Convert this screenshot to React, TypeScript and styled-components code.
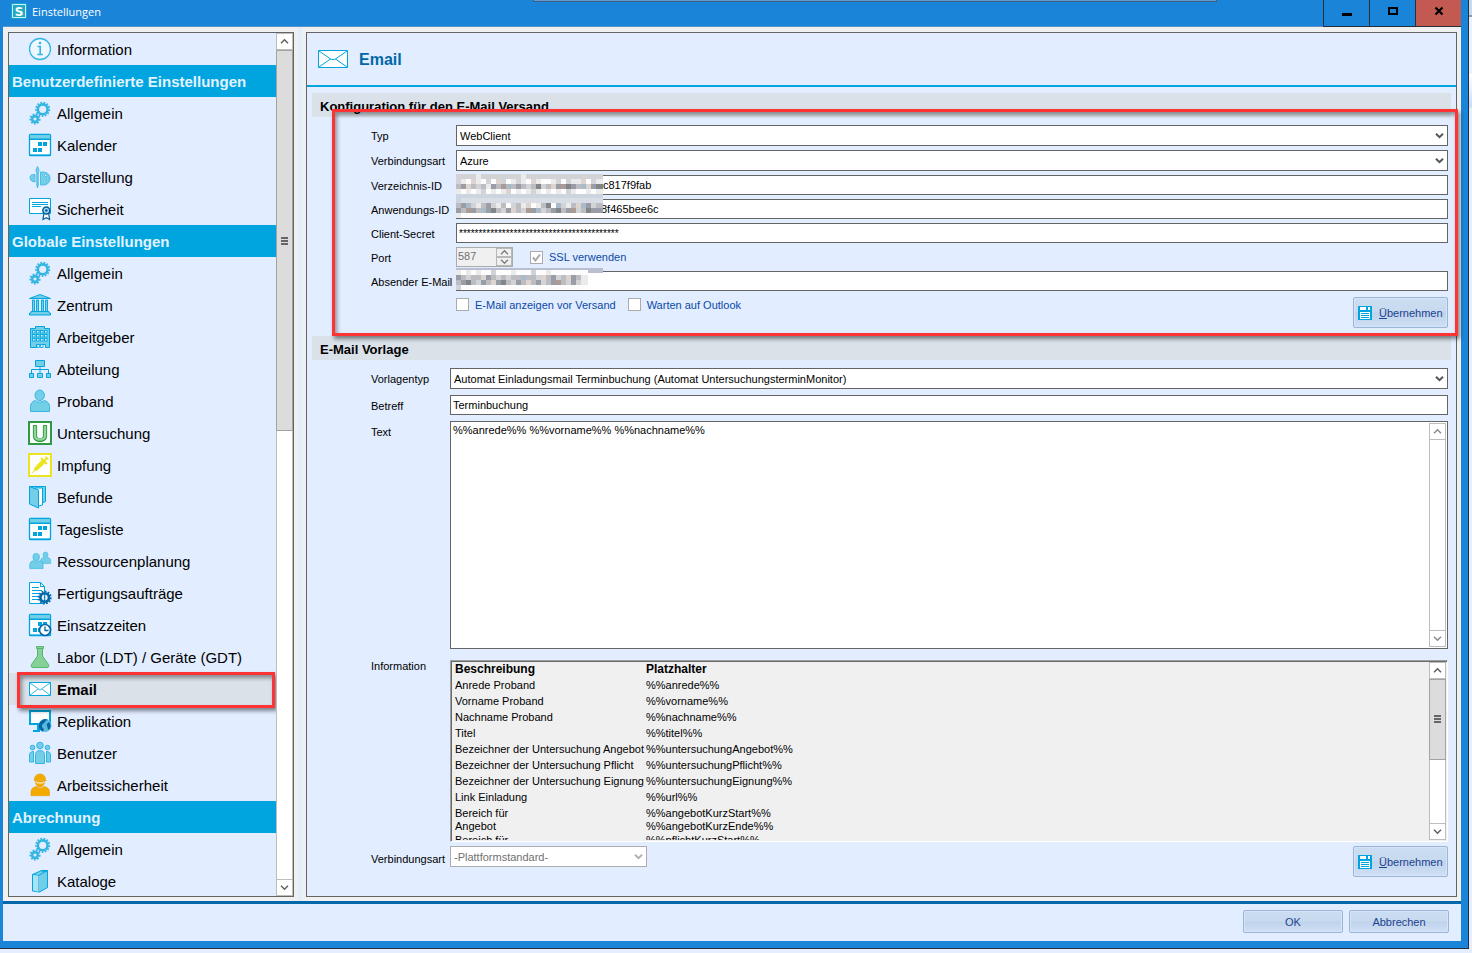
import React from 'react';
import styled, { createGlobalStyle, css } from 'styled-components';

const c = {
  chrome: '#1a84d9',
  pane: '#e2edff',
  face: '#f0f0f0',
  cyan: '#00a5e0',
  light: '#73cfe8',
  soft: '#35b5e2',
  navy: '#0068a8',
  frame: '#646464',
  band: '#dae1e9',
  link: '#0b49a8',
  red: '#ff3333',
};

const Global = createGlobalStyle`
  * { box-sizing: border-box; }
  html, body, #root { height: 100%; }
  body {
    margin: 0;
    background: #e4eeff;
    color: #000;
    font-family: "Liberation Sans", Arial, sans-serif;
    font-size: 11px;
  }
  button, input, select, textarea { font: inherit; color: inherit; margin: 0; }
`;

/* ---------- window ---------- */

const Desktop = styled.div`
  height: 100%;
  min-height: 700px;
  padding: 0 3px 4px 0;
  background: linear-gradient(#c8daf0 0 15px, #999 15px 17px, #e9f1ff 17px 74px, #fff 74px, #ccdaf7 107px, #e4eeff 108px);
`;

const Window = styled.div`
  position: relative;
  display: flex;
  flex-direction: column;
  height: 100%;
  padding: 0 7px 7px 3px;
  background: ${c.chrome};
  border: solid #26303c;
  border-width: 0 1px 1px 0;
`;

const TitleBar = styled.header`
  display: flex;
  justify-content: space-between;
  height: 27px;
  border-bottom: 1px solid #5b93c9;
`;

const Caption = styled.h1`
  display: flex;
  gap: 5px;
  margin: 0;
  padding: 3px 0 0 8px;
  color: #fff;
  font: 11px/18px "Open Sans", sans-serif;
`;

const BackTab = styled.div`
  position: absolute;
  top: 0;
  left: 533px;
  right: 251px;
  height: 2px;
  background: #5f9bd0;
  border: solid #3f5f80;
  border-width: 0 1px 1px;
`;

const WindowButtons = styled.div`
  display: flex;
  height: 27px;
`;

const WindowButton = styled.button<{ $close?: boolean }>`
  width: 46px;
  padding: 0;
  border: solid #26303c;
  border-width: 0 0 1px 1px;
  background: ${p => (p.$close ? '#c25a51' : c.chrome)};
  svg { display: block; margin: 0 auto 4px; }
`;

const Body = styled.div`
  display: flex;
  flex: 1;
  min-height: 0;
  padding: 5px 4px 4px 5px;
  background: ${c.face};
`;

const Splitter = styled.div`
  flex: none;
  width: 12px;
  margin: -5px 0 -4px;
  background: linear-gradient(90deg, ${c.face} 4px, ${c.pane} 4px 8px, ${c.face} 8px);
`;

const Footer = styled.footer`
  display: flex;
  justify-content: flex-end;
  gap: 6px;
  height: 40px;
  padding: 6px 12px 0 0;
  border-top: 3px solid ${c.navy};
  background: ${c.pane};
`;

/* ---------- sidebar ---------- */

const Sidebar = styled.nav`
  position: relative;
  display: flex;
  flex: none;
  width: 286px;
  border: 1px solid ${c.frame};
  background: ${c.pane};
`;

const NavList = styled.div`
  flex: 1;
  overflow: hidden;
`;

const NavHeading = styled.h2`
  height: 32px;
  margin: 0;
  padding-left: 3px;
  background: ${c.cyan};
  color: #e2f3ff;
  font-size: 15px;
  line-height: 33px;
`;

const NavItem = styled.a<{ $active?: boolean }>`
  position: relative;
  display: flex;
  align-items: center;
  gap: 5px;
  height: 32px;
  padding-left: 19px;
  color: #000;
  font-size: 15px;
  font-weight: ${p => (p.$active ? 700 : 400)};
  text-decoration: none;
  background: ${p => (p.$active ? c.band : 'transparent')};
  svg { flex: none; }
`;

const NavText = styled.span`
  padding-top: 2px;
  line-height: 18px;
`;

const marked = css`
  position: absolute;
  border: 3px solid ${c.red};
  box-shadow: 2px 3px 4px rgba(0, 0, 0, 0.45), inset 2px 3px 4px rgba(0, 0, 0, 0.4);
  pointer-events: none;
`;
const ItemMark = styled.span`
  ${marked}
  inset: -1px 1px -3px 8px;
  z-index: 1;
`;
const FormMark = styled.div`
  ${marked}
  inset: -8px -2px -8px 25px;
`;

/* ---------- scroll bar ---------- */

const Bar = styled.div`
  display: flex;
  flex: none;
  flex-direction: column;
  width: 17px;
  border: 1px solid #bdbdbd;
  background: #fff;
`;
const BarButton = styled.button<{ $end?: boolean }>`
  flex: none;
  height: 16px;
  padding: 0;
  border: solid #bdbdbd;
  border-width: ${p => (p.$end ? '1px 0 0' : '0 0 1px')};
  background: #fff;
  svg { display: block; margin: auto; }
`;
const Track = styled.div`
  flex: 1;
`;
const Thumb = styled.div<{ $size: number }>`
  display: flex;
  align-items: center;
  justify-content: center;
  height: ${p => p.$size}%;
  margin: 0 -1px;
  border: 1px solid #a3a3a3;
  background: #dcdcdc;
`;

function Chevron({ up, color = '#606060', width = 1.5 }: { up?: boolean; color?: string; width?: number }) {
  return (
    <svg width="9" height="7" viewBox="0 0 9 7" fill="none" stroke={color} strokeWidth={width}>
      <path d={up ? 'M1 5.2 4.5 1.8 8 5.2' : 'M1 1.8 4.5 5.2 8 1.8'} />
    </svg>
  );
}

function ScrollBar({ size, color }: { size?: number; color?: string }) {
  return (
    <Bar>
      <BarButton type="button" aria-label="Nach oben"><Chevron up color={color} /></BarButton>
      <Track>
        {size && (
          <Thumb $size={size}>
            <svg width="7" height="8" fill="#666">
              <path d="M0 0h7v2H0zM0 3h7v2H0zM0 6h7v2H0z" />
            </svg>
          </Thumb>
        )}
      </Track>
      <BarButton type="button" $end aria-label="Nach unten"><Chevron color={color} /></BarButton>
    </Bar>
  );
}

/* ---------- main panel ---------- */

const Panel = styled.main`
  display: flex;
  flex: 1;
  flex-direction: column;
  min-width: 0;
  border: 1px solid ${c.frame};
  background: ${c.pane};
`;

const PanelHeader = styled.div`
  display: flex;
  align-items: center;
  gap: 11px;
  height: 54px;
  margin-bottom: 6px;
  padding-left: 11px;
  border-bottom: 2px solid ${c.cyan};
  h2 { margin: 0; color: ${c.navy}; font-size: 16px; line-height: 18px; padding-top: 2px; }
`;

const SectionTitle = styled.h3`
  height: 24px;
  margin: 0 5px;
  padding-left: 8px;
  background: ${c.band};
  font-size: 13px;
  line-height: 27px;
`;

const ConfigForm = styled.form`
  position: relative;
  display: grid;
  grid-template-columns: 85px 1fr;
  gap: 4px 0;
  margin-bottom: 8px;
  padding: 8px 8px 0 64px;
`;

const TemplateForm = styled.form`
  display: grid;
  grid-template-columns: 79px 1fr;
  grid-template-rows: auto auto 1fr auto auto;
  gap: 6px 0;
  flex: 1;
  min-height: 0;
  padding: 8px 8px 19px 64px;
`;

const Label = styled.label`
  height: 20px;
  line-height: 22px;
  white-space: nowrap;
`;

const Field = styled.div`
  position: relative;
  display: flex;
`;

const TextInput = styled.input<{ $lead?: number; $small?: boolean }>`
  width: 100%;
  height: 20px;
  padding: 0 3px 0 ${p => p.$lead ?? 2}px;
  border: 1px solid ${c.frame};
  border-radius: 0;
  background: #fff;
  font-size: ${p => (p.$small ? 10 : 11)}px;
`;

const SelectBox = styled.div<{ $narrow?: boolean }>`
  position: relative;
  width: ${p => (p.$narrow ? '197px' : '100%')};
  height: 21px;
  select {
    appearance: none;
    width: 100%;
    height: 100%;
    padding: 0 20px 0 3px;
    border: 1px solid ${c.frame};
    border-radius: 0;
    background: #fff;
  }
  select:disabled { border-color: #adadad; color: #707070; opacity: 1; }
  svg { position: absolute; top: 7px; right: 4px; pointer-events: none; }
`;

const Spinner = styled.div`
  display: flex;
  width: 57px;
  height: 20px;
  border: 1px solid #ababab;
  background: ${c.face};
  input {
    flex: 1;
    min-width: 0;
    padding: 0 0 2px 1px;
    border: 0;
    background: none;
    color: #707070;
  }
`;
const SpinButtons = styled.div`
  display: grid;
  width: 16px;
  button { padding: 0; border: 1px solid #b8b8b8; background: ${c.face}; }
  svg { display: block; margin: auto; }
`;

const Checks = styled.div`
  display: flex;
  gap: 12px;
  padding-top: 1px;
`;
const CheckLabel = styled.label`
  display: flex;
  align-items: center;
  gap: 6px;
  height: 13px;
  color: ${c.link};
  white-space: nowrap;
`;
const CheckBox = styled.input`
  appearance: none;
  width: 13px;
  height: 13px;
  border: 1px solid #ababab;
  background: #fff;
`;
const CheckWrap = styled.span`
  position: relative;
  display: flex;
  svg { position: absolute; inset: 0; }
`;

const PortRow = styled.div`
  display: flex;
  align-items: center;
  gap: 17px;
`;

const ConfigActions = styled.div`
  display: flex;
  grid-column: 2;
  justify-content: space-between;
  padding-top: 2px;
`;
const TemplateActions = styled.div`
  display: flex;
  align-items: flex-start;
  justify-content: space-between;
  margin-top: -2px;
`;

const Button = styled.button<{ $save?: boolean }>`
  display: flex;
  align-items: center;
  justify-content: ${p => (p.$save ? 'flex-start' : 'center')};
  gap: 7px;
  width: ${p => (p.$save ? 95 : 100)}px;
  height: ${p => (p.$save ? 31 : 23)}px;
  padding: 0 0 0 ${p => (p.$save ? 4 : 0)}px;
  border: 1px solid #9ab5da;
  border-radius: 2px;
  background: linear-gradient(#cbddf1, #c8daef 45%, #bfd3ea 52%, #cfdff6);
  box-shadow: inset 0 0 0 1px #d6e4f6;
  color: #1d428f;
  white-space: nowrap;
`;

const TextArea = styled.div`
  display: flex;
  min-height: 60px;
  padding: 1px;
  border: 1px solid ${c.frame};
  background: #fff;
  textarea {
    flex: 1;
    padding: 1px;
    border: 0;
    background: none;
    line-height: 13px;
    resize: none;
    outline: 0;
  }
`;

const InfoBox = styled.div`
  display: flex;
  height: 182px;
  margin-top: 5px;
  border: 1px solid;
  border-color: #a0a0a0 #fff #fff #a0a0a0;
  background: ${c.face};
  box-shadow: inset 1px 1px 0 #696969;
  padding: 1px 1px 1px 4px;
`;
const InfoScroll = styled.div`
  flex: 1;
  height: 178px;
  overflow: hidden;
  table { border-collapse: collapse; }
  th, td {
    height: 16px;
    padding: 1px 0 0;
    line-height: 13px;
    text-align: left;
    vertical-align: top;
    white-space: nowrap;
  }
  th { font-size: 12px; }
  th:first-child { width: 191px; }
`;

/* ---------- pixelated censor strips ---------- */

const Censor = styled.svg<{ $top: number }>`
  position: absolute;
  left: 0;
  top: ${p => p.$top}px;
  pointer-events: none;
`;

const tones: Record<string, string> = {
  w: '#fdfdfd', l: '#ebebec', g: '#d2d3d6', m: '#bdbcc0', d: '#9b9da6', k: '#80868a',
  b: '#a9bac8', t: '#ded4cf', r: '#ab9b94', s: '#ccd4e0', p: '#d9dee6', h: '#b9bfd0',
};
const idStrip = [
  'gggglgggggggglggggggggggggggg',
  'glwtlwgwtgwlglwtlwwlgwglltwgl',
  'mdtmgmldmrbmdmgmkgmtdrkdmbtdk',
  'lwlwlgwlwltwlwlglwlwlwglwwlwl',
  'sssssssssssssssssssssssssssss',
];
const appStrip = [
  'spppppppppppppppppppppppppppp',
  'mdbglmdglmwgmltwlmkwbglmtbdgm',
  'dmrdmbdkmgdtmgrdbgmdkmdrgmkdd',
  'lwwwwwwwwwwwwwwwwwwwwwwwwwwww',
];
const mailStrip = [
  'lwlwlwwgwwwlwwwgwwlwwwwwww',
  'dmgmmtdmgmgmmbmmgtmdgmtdml',
  'mdkmgdmtdkmgdmtmdgmdrmgdgl',
  'gwwwwwwwwwwwwwwwwwwwwwwwww',
];
const edgeStrip = ['h'.repeat(29)];

function Pixels({ rows, top }: { rows: string[]; top: number }) {
  return (
    <Censor $top={top} width={rows[0].length * 5 + 2} height={rows.length * 5} shapeRendering="crispEdges" aria-hidden>
      {rows.map((row, j) => [...row].map((k, i) => (
        <rect key={`${i}-${j}`} x={i * 5} y={j * 5} width={i === row.length - 1 ? 7 : 5} height="5" fill={tones[k]} />
      )))}
    </Censor>
  );
}

/* ---------- icons ---------- */

const person = (x: number, y: number, s: number) => (
  <g transform={`translate(${x} ${y}) scale(${s})`} fill={c.light} stroke={c.soft}>
    <path d="M2.500 22.500v-5c0-3.500 2.500-5.500 5-6 2 2.200 6.500 2.200 8.500 0 3 .5 5.500 2.500 5.500 6v5z" />
    <ellipse cx="11.700" cy="6.300" rx="4.700" ry="5.300" />
  </g>
);

const gear = (x: number, y: number, r: number, color: string, n: number) => (
  <g fill="none" stroke={color}>
    <circle cx={x} cy={y} r={r - 2.5} strokeWidth="2.600" />
    <circle cx={x} cy={y} r={r - 0.7} strokeWidth="1.800" pathLength={n * 2} strokeDasharray="1.100 .9" />
  </g>
);

const calendar = (
  <>
    <rect x="1.500" y="1.500" width="21" height="21" rx="1" fill="#fff" stroke={c.cyan} strokeWidth="1.300" />
    <path d="M2 2h20v4H2z" fill={c.light} />
    <path d="M1 5.500h22V7H1zM10 9h4v4h-4zM15 9h4v4h-4zM5 15h4v4H5zM10 15h4v4h-4zM1 21.500h22v1.500H1z" fill={c.cyan} />
  </>
);

const icons: Record<string, React.ReactNode> = {
  info: (
    <g fill="none" stroke={c.soft}>
      <circle cx="12" cy="12" r="10.500" fill="#ecf7ff" strokeWidth="1.300" />
      <path d="M9.500 9.500h2.700v8M9.300 17.500h5.500" strokeWidth="1.600" />
      <circle cx="12" cy="6" r=".7" strokeWidth="1.200" />
    </g>
  ),
  gears: <>{gear(14.7, 8.3, 7.4, c.soft, 13)}{gear(7, 18, 5.4, c.soft, 9)}</>,
  calendar,
  brush: (
    <g fill={c.light} stroke={c.soft} strokeWidth=".8">
      <path d="M7 9.500C3.500 9 2 10.500 2 12.500s1.500 4.500 5 4.500z" />
      <path d="M12.500 7H15c4.500 0 7 3 7 6.500S19.500 20 15.500 20h-3z" />
      <circle cx="17.500" cy="10.500" r="1" fill="#fff" /><circle cx="19.300" cy="14" r="1" fill="#fff" /><circle cx="16.500" cy="16.700" r="1" fill="#fff" />
      <path d="M9.500 1.500c2 3 1.500 5 .7 6.500v12l-.7 3-.7-3V8c-.9-1.500-1.300-3.500.7-6.500z" />
    </g>
  ),
  certificate: (
    <g fill="none">
      <path d="M1.500 1.500h21v15h-21z" fill="#fff" stroke={c.cyan} />
      <path d="M4 5.500h16M4 7.500h16M4 9.500h9" stroke={c.cyan} />
      <path d="m16 16-1 6.500 3.300-1.800 3.300 1.800-1-6.500" fill="#fff" stroke="#005c99" strokeWidth="1.200" />
      <circle cx="18.300" cy="13.500" r="3.500" fill="#9fd4ee" stroke="#005c99" strokeWidth="1.500" />
      <circle cx="18.300" cy="13.500" r="1.300" fill="#005c99" />
    </g>
  ),
  museum: (
    <g fill={c.light} stroke={c.cyan}>
      <path d="M1.500 5.500 12 1.500l10.500 4z" />
      <path d="M4.500 7h2v11.500h-2zM8.500 7h2v11.500h-2zM13.500 7h2v11.500h-2zM17.500 7h2v11.500h-2z" strokeWidth=".9" />
      <path d="M3 18.500h18v1.500h1.500v2h-21v-2H3z" />
    </g>
  ),
  building: (
    <g>
      <path d="M2.500 3.500h5v-2h9v2h5v19h-4v-3h-9v3h-6z" fill={c.light} stroke={c.cyan} />
      <path d="M9 19.500h2.500v3H9zM12.500 19.500H15v3h-2.500z" fill="#e2f6ff" stroke={c.cyan} strokeWidth=".8" />
      {[5.5, 9.5, 13.5].map(y => [4.5, 8.5, 12.5, 16.5].map(x => (
        <rect key={`${x}-${y}`} x={x} y={y} width="2.500" height="2.500" fill="#e9f8ff" stroke={c.cyan} strokeWidth=".9" />
      )))}
    </g>
  ),
  org: (
    <g fill={c.light} stroke={c.cyan}>
      <path d="M7.500 3.500h9v6h-9zM1.500 16.500h4v4h-4zM9.500 16.500h5v4h-5zM18.500 16.500h4v4h-4z" />
      <path d="M12 9.500v7M3.500 16.500v-4h17v4" fill="none" />
    </g>
  ),
  person: person(0, 0, 1),
  exam: (
    <g>
      <path d="M1 1h22v22H1z" fill="#fff" stroke="#2f9a41" strokeWidth="2" />
      <path d="M7 4v11c0 5.500 10 5.500 10 0V4" fill="none" stroke="#2f9a41" strokeWidth="4.200" />
      <path d="M7 4.800V15c0 4.700 10 4.700 10 0V4.800" fill="none" stroke="#8fd69b" strokeWidth="2.400" />
    </g>
  ),
  syringe: (
    <g stroke="#ece41c" fill="#ece41c">
      <path d="M1 1h22v22H1z" fill="#fff" strokeWidth="2" />
      <path d="m4 20 4-4" strokeWidth="1" />
      <path d="m6.500 15 8-8.500 3 3-8.500 8-2.500.5z" strokeWidth=".5" />
      <path d="m13 5 6 6M16.500 7.500 19 5" strokeWidth="1.800" />
      <path d="m17.500 3.500 3 3" strokeWidth="1.500" />
    </g>
  ),
  folder: (
    <g stroke={c.cyan} fill={c.light}>
      <path d="M1.500 1.500h16v15l-5 2z" />
      <path d="M7 3h7.500v17l-4 1z" fill="#fff" />
      <path d="M1.500 1.500 10.500 5v18L1.500 19z" />
    </g>
  ),
  people: <>{person(11.3, 2.5, 0.53)}{person(0, 3.7, 0.7)}</>,
  order: (
    <>
      <path d="M1.500 1.500h11l4 4v17h-15z" fill="#fff" stroke={c.cyan} />
      <path d="M12.500 1.500v4h4M4 6.500h7M4 9.500h10M4 12.500h7M4 15.500h6M4 18.500h6" stroke={c.cyan} fill="none" />
      <circle cx="16.700" cy="16.500" r="5" fill="#e2edff" />
      {gear(16.7, 16.5, 6.8, c.navy, 12)}
      <path d="M16.700 13v7" stroke={c.navy} />
    </>
  ),
  shift: (
    <>
      {calendar}
      <circle cx="17" cy="17" r="5.500" fill="#fff" stroke={c.navy} strokeWidth="1.700" />
      <path d="M17 13.500V17.500h3.500" stroke={c.navy} strokeWidth="1.300" fill="none" />
    </>
  ),
  flask: (
    <g fill="#85d097" stroke="#58b570">
      <path d="M9.500 3v8l-6 8.500c-1 2 0 3 1.500 3h14c1.500 0 2.500-1 1.500-3l-6-8.500V3z" />
      <path d="M8.500 1.500h7v2h-7z" />
    </g>
  ),
  mail: (
    <g fill="none" stroke={c.cyan}>
      <path d="M1.500 5.500h21v13h-21z" fill="#fff" />
      <path d="m2 6 10 7 10-7M2 18l8-6M22 18l-8-6" strokeWidth=".8" />
    </g>
  ),
  sync: (
    <>
      <path d="M2 2h20v13H2z" fill="#fff" stroke={c.cyan} strokeWidth="2" />
      <path d="M5 21h7v2H5zM9 16h3v5H9z" fill={c.cyan} />
      <circle cx="17" cy="16.500" r="6.500" fill="#5bb9de" />
      <path d="M11 15c2-5 7-6 9-4-3 0-3 3-5 4s-1 4 1 5l-1 2.500c-3-.5-5-4-4-7.500zM21 13c2 2 2 6 0 8-2-1-1-3-2-4s0-3 2-4z" fill={c.navy} />
    </>
  ),
  users: (
    <g fill={c.light} stroke={c.soft}>
      <circle cx="4.500" cy="6.500" r="2.300" /><circle cx="19.500" cy="6.500" r="2.300" />
      <path d="M5.500 10.500c-3 0-4 1.500-4 3.500v7h4zM18.500 10.500c3 0 4 1.500 4 3.500v7h-4z" />
      <path d="M7.500 22.500v-9c0-2.500 2-4 4.500-4s4.500 1.500 4.500 4v9z" />
      <circle cx="12" cy="4.500" r="3.300" />
    </g>
  ),
  worker: (
    <g fill="#f3ab00" stroke="#e89c00" strokeWidth=".6">
      <path d="M3 22.700v-4c0-3 2.500-4.700 5.500-5.200 2 2 5.500 2 7.500 0 3 .5 5.500 2.200 5.500 5.200v4z" />
      <path d="M7.500 8c0 4 2 6 4.500 6s4.500-2 4.500-6z" />
      <path d="M6.300 7.500C6.300 3 9 1 12 1s5.500 2 5.500 5.500l1 1z" />
      <path d="M8 9c2.500 1.300 6 1.300 8 0" fill="none" stroke="#ffe6ae" strokeWidth="1.400" />
    </g>
  ),
  book: (
    <g fill={c.light} stroke={c.cyan}>
      <path d="M4.500 5.500 13.500 1.500h6v17l-8 4.500-7-1z" />
      <path d="m4.500 5.500 6 1 9-5M10.500 6.500v16.500M13 1.800l4.500.7" fill="none" />
      <path d="M5 6v15.500l5.500 1.200V6.800z" fill="#a9e2f2" stroke="none" />
    </g>
  ),
};

const Icon = ({ name }: { name: string }) => <svg width="24" height="24" viewBox="0 0 24 24" aria-hidden>{icons[name]}</svg>;

const SaveIcon = () => (
  <svg width="14" height="14" viewBox="0 0 14 14" aria-hidden>
    <path d="M0 0h14v14H0z" fill={c.cyan} />
    <path d="M2 1h6v3H2zM10 1h2v3h-2zM2 6h10v7H2z" fill="#fff" />
    <path d="M3 7.500h8M3 9.500h8M3 11.500h8" stroke={c.cyan} />
  </svg>
);

/* ---------- data ---------- */

type Entry = { heading: string } | { icon: string; text: string };

const entries: Entry[] = [
  { icon: 'info', text: 'Information' },
  { heading: 'Benutzerdefinierte Einstellungen' },
  { icon: 'gears', text: 'Allgemein' },
  { icon: 'calendar', text: 'Kalender' },
  { icon: 'brush', text: 'Darstellung' },
  { icon: 'certificate', text: 'Sicherheit' },
  { heading: 'Globale Einstellungen' },
  { icon: 'gears', text: 'Allgemein' },
  { icon: 'museum', text: 'Zentrum' },
  { icon: 'building', text: 'Arbeitgeber' },
  { icon: 'org', text: 'Abteilung' },
  { icon: 'person', text: 'Proband' },
  { icon: 'exam', text: 'Untersuchung' },
  { icon: 'syringe', text: 'Impfung' },
  { icon: 'folder', text: 'Befunde' },
  { icon: 'calendar', text: 'Tagesliste' },
  { icon: 'people', text: 'Ressourcenplanung' },
  { icon: 'order', text: 'Fertigungsaufträge' },
  { icon: 'shift', text: 'Einsatzzeiten' },
  { icon: 'flask', text: 'Labor (LDT) / Geräte (GDT)' },
  { icon: 'mail', text: 'Email' },
  { icon: 'sync', text: 'Replikation' },
  { icon: 'users', text: 'Benutzer' },
  { icon: 'worker', text: 'Arbeitssicherheit' },
  { heading: 'Abrechnung' },
  { icon: 'gears', text: 'Allgemein' },
  { icon: 'book', text: 'Kataloge' },
];

const placeholders: [string, string][] = [
  ['Anrede Proband', '%%anrede%%'],
  ['Vorname Proband', '%%vorname%%'],
  ['Nachname Proband', '%%nachname%%'],
  ['Titel', '%%titel%%'],
  ['Bezeichner der Untersuchung Angebot', '%%untersuchungAngebot%%'],
  ['Bezeichner der Untersuchung Pflicht', '%%untersuchungPflicht%%'],
  ['Bezeichner der Untersuchung Eignung', '%%untersuchungEignung%%'],
  ['Link Einladung', '%%url%%'],
];

function Select({ id, value, disabled, narrow }: { id: string; value: string; disabled?: boolean; narrow?: boolean }) {
  return (
    <SelectBox $narrow={narrow}>
      <select id={id} disabled={disabled} defaultValue={value}>
        <option>{value}</option>
      </select>
      <Chevron color={disabled ? '#b0b0b0' : '#555'} width={2} />
    </SelectBox>
  );
}

const SaveButton = () => (
  <Button type="button" $save><SaveIcon /><span><u>Ü</u>bernehmen</span></Button>
);

export default function App() {
  return (
    <Desktop>
      <Global />
      <Window>
        <TitleBar>
          <Caption>
            <svg width="16" height="16" viewBox="0 0 16 16" aria-hidden>
              <path d="M0 0h16v16H0z" fill="#16a3cf" />
              <path d="M1.500 1.500h13v13h-13z" fill="#23a9c4" stroke="#c9f3f8" />
              <text x="8" y="12.500" textAnchor="middle" fontFamily="DejaVu Sans" fontWeight="700" fontSize="12" fill="#fff">S</text>
            </svg>
            Einstellungen
          </Caption>
          <BackTab />
          <WindowButtons>
            <WindowButton aria-label="Minimieren">
              <svg width="12" height="10"><path d="M1 7h10v3H1z" /></svg>
            </WindowButton>
            <WindowButton aria-label="Maximieren">
              <svg width="12" height="10"><path d="M2 2h8v6H2z" fill="none" stroke="#000" strokeWidth="2" /></svg>
            </WindowButton>
            <WindowButton $close aria-label="Schließen">
              <svg width="12" height="10"><path d="m2.500 1.500 7 7M9.500 1.500l-7 7" stroke="#000" strokeWidth="2.200" /></svg>
            </WindowButton>
          </WindowButtons>
        </TitleBar>

        <Body>
          <Sidebar>
            <NavList>
              {entries.map((e, i) => 'heading' in e
                ? <NavHeading key={i}>{e.heading}</NavHeading>
                : (
                  <NavItem key={i} href="#" $active={e.icon === 'mail'}>
                    <Icon name={e.icon} />
                    <NavText>{e.text}</NavText>
                    {e.icon === 'mail' && <ItemMark />}
                  </NavItem>
                ))}
            </NavList>
            <ScrollBar size={46} />
          </Sidebar>
          <Splitter />
          <Panel>
            <PanelHeader>
              <svg width="30" height="18" viewBox="0 0 30 18" fill="none" stroke={c.cyan} aria-hidden>
                <path d="M.5.5h29v17H.5z" fill="#fff" />
                <path d="m1 1 11.500 8q2.500 1.500 5 0L29 1M1 17l11.500-8M29 17 17.500 9" />
              </svg>
              <h2>Email</h2>
            </PanelHeader>

            <SectionTitle>Konfiguration für den E-Mail Versand</SectionTitle>
            <ConfigForm>
              <Label htmlFor="typ">Typ</Label>
              <Select id="typ" value="WebClient" />
              <Label htmlFor="verbindung">Verbindungsart</Label>
              <Select id="verbindung" value="Azure" />
              <Label htmlFor="verzeichnis">Verzeichnis-ID</Label>
              <Field>
                <TextInput id="verzeichnis" $lead={146} defaultValue="c817f9fab" />
                <Pixels rows={idStrip} top={-1} />
              </Field>
              <Label htmlFor="anwendung">Anwendungs-ID</Label>
              <Field>
                <TextInput id="anwendung" $lead={144} defaultValue="8f465bee6c" />
                <Pixels rows={appStrip} top={-1} />
              </Field>
              <Label htmlFor="secret">Client-Secret</Label>
              <TextInput id="secret" $small defaultValue={'*'.repeat(41)} />
              <Label htmlFor="port">Port</Label>
              <PortRow>
                <Spinner>
                  <input id="port" defaultValue="587" disabled />
                  <SpinButtons>
                    <button type="button" disabled aria-label="Erhöhen"><Chevron up color="#808080" /></button>
                    <button type="button" disabled aria-label="Verringern"><Chevron color="#808080" /></button>
                  </SpinButtons>
                </Spinner>
                <CheckLabel>
                  <CheckWrap>
                    <CheckBox type="checkbox" defaultChecked disabled />
                    <svg width="13" height="13" fill="none" stroke="#a8a8a8" strokeWidth="2"><path d="m3 6.500 2.500 3 4.500-6" /></svg>
                  </CheckWrap>
                  SSL verwenden
                </CheckLabel>
              </PortRow>
              <Label htmlFor="absender">Absender E-Mail</Label>
              <Field>
                <TextInput id="absender" />
                <Pixels rows={edgeStrip} top={-3} />
                <Pixels rows={mailStrip} top={-1} />
              </Field>
              <ConfigActions>
                <Checks>
                  <CheckLabel><CheckBox type="checkbox" />E-Mail anzeigen vor Versand</CheckLabel>
                  <CheckLabel><CheckBox type="checkbox" />Warten auf Outlook</CheckLabel>
                </Checks>
                <SaveButton />
              </ConfigActions>
              <FormMark />
            </ConfigForm>

            <SectionTitle>E-Mail Vorlage</SectionTitle>
            <TemplateForm>
              <Label htmlFor="vorlage">Vorlagentyp</Label>
              <Select id="vorlage" value="Automat Einladungsmail Terminbuchung (Automat UntersuchungsterminMonitor)" />
              <Label htmlFor="betreff">Betreff</Label>
              <TextInput id="betreff" defaultValue="Terminbuchung" />
              <Label htmlFor="text">Text</Label>
              <TextArea>
                <textarea id="text" defaultValue="%%anrede%% %%vorname%% %%nachname%%" />
                <ScrollBar color="#8a8a8a" />
              </TextArea>
              <Label as="span">Information</Label>
              <InfoBox>
                <InfoScroll>
                  <table>
                    <thead>
                      <tr><th>Beschreibung</th><th>Platzhalter</th></tr>
                    </thead>
                    <tbody>
                      {placeholders.map(([a, b]) => <tr key={a}><td>{a}</td><td>{b}</td></tr>)}
                      <tr>
                        <td>Bereich für<br />Angebot</td>
                        <td>%%angebotKurzStart%%<br />%%angebotKurzEnde%%</td>
                      </tr>
                      <tr>
                        <td>Bereich für</td>
                        <td>%%pflichtKurzStart%%</td>
                      </tr>
                    </tbody>
                  </table>
                </InfoScroll>
                <ScrollBar size={56} />
              </InfoBox>
              <Label htmlFor="vorlageVerbindung">Verbindungsart</Label>
              <TemplateActions>
                <Select id="vorlageVerbindung" value="-Plattformstandard-" disabled narrow />
                <SaveButton />
              </TemplateActions>
            </TemplateForm>
          </Panel>
        </Body>

        <Footer>
          <Button type="button">OK</Button>
          <Button type="button">Abbrechen</Button>
        </Footer>
      </Window>
    </Desktop>
  );
}
